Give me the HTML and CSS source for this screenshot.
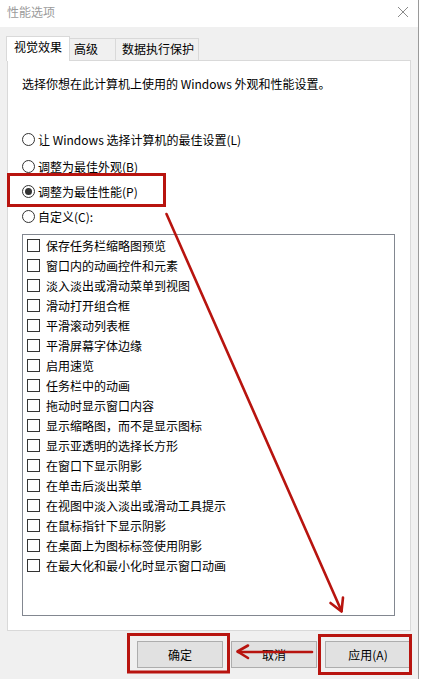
FILE: index.html
```html
<!DOCTYPE html>
<html lang="zh-CN">
<head>
<meta charset="utf-8">
<title>性能选项</title>
<link rel="stylesheet" href="styles.css">
</head>
<body>
<div class="window">
  <div class="titlebar">
    <span class="title">性能选项</span>
    <svg class="close" width="12" height="12" viewBox="0 0 12 12"><path d="M1 1L11 11M11 1L1 11" stroke="#8a8a8a" stroke-width="1" fill="none"/></svg>
  </div>
  <div class="client">
    <div class="tabs">
      <div class="tab tab-sel">视觉效果</div>
      <div class="tab tab-adv">高级</div>
      <div class="tab tab-dep">数据执行保护</div>
    </div>
    <div class="panel">
      <p class="intro">选择你想在此计算机上使用的 Windows 外观和性能设置。</p>
      <div class="radios">
        <div class="radio r1"><span class="dot"></span>让 Windows 选择计算机的最佳设置(L)</div>
        <div class="radio r2"><span class="dot"></span>调整为最佳外观(B)</div>
        <div class="radio r3"><span class="dot on"></span>调整为最佳性能(P)</div>
        <div class="radio r4"><span class="dot"></span>自定义(C):</div>
      </div>
      <div class="listbox">
        <div class="item"><span class="box"></span>保存任务栏缩略图预览</div>
        <div class="item"><span class="box"></span>窗口内的动画控件和元素</div>
        <div class="item"><span class="box"></span>淡入淡出或滑动菜单到视图</div>
        <div class="item"><span class="box"></span>滑动打开组合框</div>
        <div class="item"><span class="box"></span>平滑滚动列表框</div>
        <div class="item"><span class="box"></span>平滑屏幕字体边缘</div>
        <div class="item"><span class="box"></span>启用速览</div>
        <div class="item"><span class="box"></span>任务栏中的动画</div>
        <div class="item"><span class="box"></span>拖动时显示窗口内容</div>
        <div class="item"><span class="box"></span>显示缩略图，而不是显示图标</div>
        <div class="item"><span class="box"></span>显示亚透明的选择长方形</div>
        <div class="item"><span class="box"></span>在窗口下显示阴影</div>
        <div class="item"><span class="box"></span>在单击后淡出菜单</div>
        <div class="item"><span class="box"></span>在视图中淡入淡出或滑动工具提示</div>
        <div class="item"><span class="box"></span>在鼠标指针下显示阴影</div>
        <div class="item"><span class="box"></span>在桌面上为图标标签使用阴影</div>
        <div class="item"><span class="box"></span>在最大化和最小化时显示窗口动画</div>
      </div>
    </div>
    <div class="buttons">
      <button class="btn">确定</button>
      <button class="btn">取消</button>
      <button class="btn">应用(A)</button>
    </div>
  </div>
</div>
<svg class="annot" width="421" height="679" viewBox="0 0 421 679">
  <g fill="none" stroke="#b8140f" stroke-width="3">
    <rect x="8.5" y="174.5" width="156" height="31"/>
    <rect x="128.5" y="634.5" width="100" height="37.5"/>
    <rect x="319.5" y="635.5" width="91" height="38"/>
  </g>
  <g fill="none" stroke="#b8140f" stroke-width="2.6" stroke-linecap="round" stroke-linejoin="round">
    <path d="M166.5 214L341.5 611"/>
    <path d="M330.5 603L341.5 611.5L343 597.5"/>
    <path d="M312 652H238"/>
    <path d="M248 645.5L237.5 651.5L248 658"/>
  </g>
</svg>
</body>
</html>
```

FILE: styles.css
```css
html, body {
  margin: 0;
  padding: 0;
  background: #ffffff;
}
body {
  width: 421px;
  height: 679px;
  overflow: hidden;
  position: relative;
  font-family: "Noto Sans CJK SC", "Noto Sans", sans-serif;
  font-size: 12px;
  color: #000;
}
.window {
  width: 418px;
  height: 679px;
  border-right: 1px solid #9a9a9a;
  background: #f0f0f0;
  display: flex;
  flex-direction: column;
}
.titlebar {
  height: 27px;
  background: #ffffff;
  display: flex;
  align-items: center;
  justify-content: space-between;
  padding: 0 9px 0 7px;
  box-sizing: border-box;
}
.title {
  color: #9b9b9b;
  line-height: 24px;
  margin-top: -3px;
}
.close {
  margin-top: -4px;
}
.client {
  padding: 9px 7px 0 7px;
  display: flex;
  flex-direction: column;
}
.tabs {
  display: flex;
  align-items: flex-end;
  height: 25px;
  margin-left: -1px;
  margin-bottom: -1px;
  position: relative;
  z-index: 1;
}
.tab {
  box-sizing: border-box;
  border: 1px solid #d9d9d9;
  height: 23px;
  background: #f0f0f0;
  line-height: 20px;
  white-space: nowrap;
}
.tab-sel {
  width: 64px;
  height: 25px;
  background: #fff;
  border-bottom: none;
  padding-left: 7px;
  line-height: 20px;
}
.tab-adv {
  width: 47px;
  margin-left: -1px;
  padding-left: 4px;
}
.tab-dep {
  width: 84px;
  margin-left: -1px;
  padding-left: 6px;
}
.panel {
  background: #fff;
  border: 1px solid #d9d9d9;
  height: 571px;
  box-sizing: border-box;
  padding: 0 15px 0 14px;
  display: flex;
  flex-direction: column;
}
.intro {
  margin: 13px 0 0 0;
  line-height: 20px;
  white-space: nowrap;
}
.radios {
  display: flex;
  flex-direction: column;
  margin-top: 35px;
}
.radio {
  display: flex;
  align-items: center;
  height: 20px;
  white-space: nowrap;
}
.r2 { margin-top: 7px; }
.r3 { margin-top: 5px; }
.r4 { margin-top: 5px; }
.dot {
  width: 13px;
  height: 13px;
  box-sizing: border-box;
  border: 1px solid #333;
  border-radius: 50%;
  background: #fff;
  margin-right: 3px;
  display: flex;
  align-items: center;
  justify-content: center;
  flex: none;
}
.dot.on::after {
  content: "";
  width: 7px;
  height: 7px;
  border-radius: 50%;
  background: #333;
}
.listbox {
  margin-top: 8px;
  height: 382px;
  box-sizing: border-box;
  border: 1px solid #828790;
  padding: 0 0 0 4px;
  display: flex;
  flex-direction: column;
}
.item {
  height: 20px;
  display: flex;
  align-items: center;
  white-space: nowrap;
}
.box {
  width: 13px;
  height: 13px;
  box-sizing: border-box;
  border: 1px solid #333;
  background: #fff;
  margin-right: 6px;
  flex: none;
}
.buttons {
  display: flex;
  justify-content: flex-end;
  gap: 8px;
  margin-top: 10px;
}
.btn {
  width: 86px;
  height: 27px;
  box-sizing: border-box;
  border: 1px solid #adadad;
  background: #e1e1e1;
  font-family: "Noto Sans CJK SC", "Noto Sans", sans-serif;
  font-size: 12px;
  color: #000;
  padding: 0;
}
.annot {
  position: absolute;
  left: 0;
  top: 0;
  pointer-events: none;
}
```
